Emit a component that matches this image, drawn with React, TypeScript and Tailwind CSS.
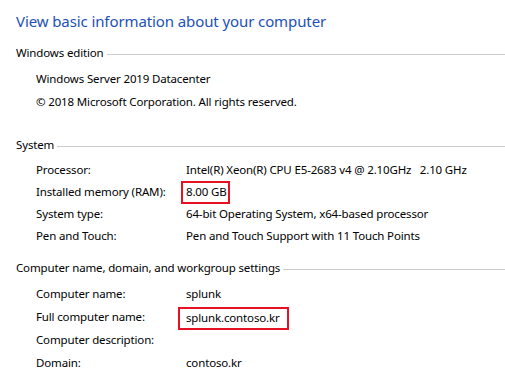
const rowFont = "font-['Noto_Sans',sans-serif] text-[11.5px] tracking-[-0.15px] text-black";

function SectionHeader({ title }: { title: string }) {
  return (
    <div className="flex items-center h-[22px] pl-4">
      <span className="whitespace-nowrap">{title}</span>
      <div className="flex-1 h-px bg-[#cccccc] ml-[3px] mt-[2px]" />
    </div>
  );
}

function Row({ label, value, h = 'h-[22px]' }: { label: string; value?: React.ReactNode; h?: string }) {
  return (
    <div className={`flex items-center pl-9 ${h}`}>
      <div className="w-[150px] shrink-0 whitespace-nowrap">{label}</div>
      <div className="whitespace-pre">{value}</div>
    </div>
  );
}

export default function App() {
  return (
    <div className={`w-[505px] h-[379px] bg-white overflow-hidden ${rowFont}`}>
      <h1 className="h-[42px] pt-[9px] pl-4 text-[15px] leading-6 tracking-[-0.1px] text-[#2151b8] font-['Noto_Sans',sans-serif]">
        View basic information about your computer
      </h1>

      {/* Windows edition */}
      <SectionHeader title="Windows edition" />
      <div className="mt-[3px]">
        <Row h="h-[23px]" label="Windows Server 2019 Datacenter" />
        <Row h="h-[23px]" label="© 2018 Microsoft Corporation. All rights reserved." />
      </div>

      {/* System */}
      <div className="mt-[21px]">
        <SectionHeader title="System" />
      </div>
      <div className="mt-[3px]">
        <Row label="Processor:" value="Intel(R) Xeon(R) CPU E5-2683 v4 @ 2.10GHz   2.10 GHz" />
        <Row
          label="Installed memory (RAM):"
          value={
            <span className="inline-flex items-center ml-[-5px] pl-[3px] w-[49px] h-[23px] border-2 border-[#e81123]">
              8.00 GB
            </span>
          }
        />
        <Row label="System type:" value="64-bit Operating System, x64-based processor" />
        <Row label="Pen and Touch:" value="Pen and Touch Support with 11 Touch Points" />
      </div>

      {/* Computer name */}
      <div className="mt-[10px]">
        <SectionHeader title="Computer name, domain, and workgroup settings" />
      </div>
      <div className="mt-[3px]">
        <Row h="h-[23px]" label="Computer name:" value="splunk" />
        <Row
          h="h-[23px]"
          label="Full computer name:"
          value={
            <span className="inline-flex items-center ml-[-8px] pl-[6px] w-[111px] h-[23px] mt-[3px] border-2 border-[#e81123]">
              splunk.contoso.kr
            </span>
          }
        />
        <Row h="h-[23px]" label="Computer description:" />
        <Row h="h-[23px]" label="Domain:" value="contoso.kr" />
      </div>
    </div>
  );
}
